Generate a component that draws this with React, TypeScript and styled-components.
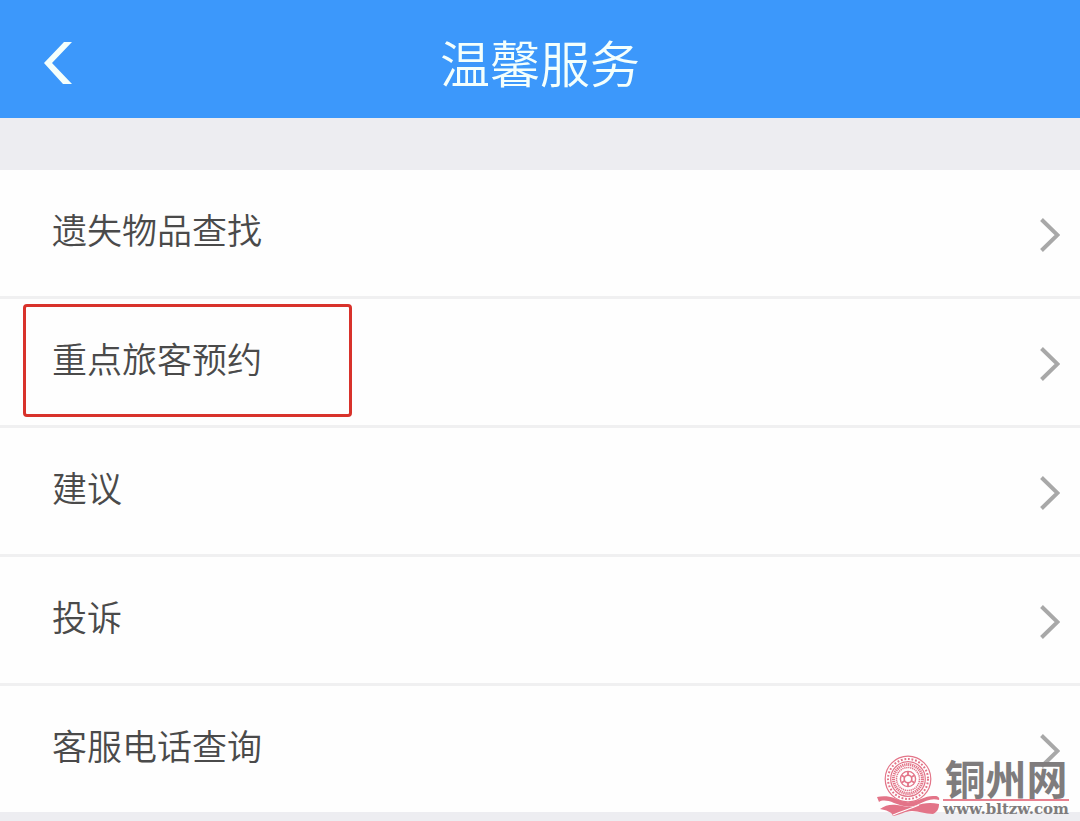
import React from "react";
import styled, { createGlobalStyle } from "styled-components";

const GlobalStyle = createGlobalStyle`
  * { box-sizing: border-box; }
  body {
    margin: 0;
    background: #ededf1;
    color: #4a4a4a;
    font-family: "Noto Sans CJK SC", sans-serif;
  }
`;

const Page = styled.div`
  position: relative;
  min-height: 100vh;
`;

const Header = styled.header`
  display: grid;
  grid-template-columns: 100px 1fr 100px;
  align-items: center;
  height: 118px;
  padding-top: 8px;
  background: #3c98fb;
  color: #f4fffc;
`;

const BackButton = styled.button`
  display: flex;
  justify-content: flex-end;
  width: 72px;
  padding: 0;
  border: 0;
  background: none;
  color: inherit;
  cursor: pointer;
`;

const Title = styled.h1`
  margin: 0;
  padding-bottom: 4px;
  font-size: 50px;
  font-weight: 350;
  line-height: 60px;
  text-align: center;
`;

const List = styled.ul`
  display: flex;
  flex-direction: column;
  gap: 3px;
  margin: 52px 0 0;
  padding: 0;
  background: #f0f0f1;
  list-style: none;
`;

const Item = styled.li`
  position: relative;
  background: #fefefe;
`;

const ItemLink = styled.a`
  display: flex;
  align-items: center;
  justify-content: space-between;
  height: 126px;
  padding: 0 20px 0 52px;
  color: inherit;
  font-size: 35px;
  font-weight: 350;
  line-height: 50px;
  text-decoration: none;
`;

const Label = styled.span`
  padding-bottom: 8px;
`;

const Chevron = styled.svg`
  display: block;
  margin-top: 4px;
`;

const Highlight = styled.span`
  position: absolute;
  top: 5px;
  left: 23px;
  width: 329px;
  height: 113px;
  border: 3px solid #d8322b;
  border-radius: 4px;
  pointer-events: none;
`;

const Watermark = styled.div`
  position: absolute;
  right: 11px;
  bottom: 4px;
  display: flex;
  align-items: flex-start;
  gap: 2px;
  color: #7f7c7d;
`;

const WatermarkText = styled.div`
  display: flex;
  flex-direction: column;
`;

const SiteName = styled.strong`
  font-size: 41px;
  font-weight: 700;
  line-height: 44px;
  text-align: center;
`;

const SiteAddress = styled.span`
  border-top: 2px solid #e8808f;
  font-family: "DejaVu Serif", serif;
  font-size: 15px;
  font-weight: 700;
  line-height: 16px;
`;

const items = ["遗失物品查找", "重点旅客预约", "建议", "投诉", "客服电话查询"];
const highlighted = "重点旅客预约";

function DrumLogo() {
  return (
    <svg width="64" height="62" viewBox="0 0 64 62" fill="none" aria-hidden="true">
      <g stroke="#e37488">
        <circle cx="31" cy="24" r="22.8" strokeWidth="1.2" />
        <circle cx="31" cy="24" r="20" strokeWidth="2" strokeDasharray="1.8 1.8" />
        <circle cx="31" cy="24" r="17.3" strokeWidth="1.2" />
        <circle cx="31" cy="24" r="14.5" strokeWidth="3" strokeDasharray="1.3 0.7" />
        <circle cx="31" cy="24" r="11.5" strokeWidth="1.5" strokeDasharray="1.3 0.7" />
        <circle cx="31" cy="24" r="7.6" strokeWidth="1.4" />
        <circle cx="31" cy="24" r="3.8" strokeWidth="1.6" />
      </g>
      <path
        d="M31 17V20M31 28V31M24.9 20.5L27.5 22M34.5 26L37.1 27.5M24.9 27.5L27.5 26M34.5 22L37.1 20.5"
        stroke="#e37488"
        strokeWidth="1.8"
      />
      <path d="M0 42C5 41 12 41 17 43C23 45 27 48 33 47C42 46 49 40 58 41C61 41 63 43 62 45C54 43 49 46 42 49C33 54 25 51 17 48C10 45 5 45 2 47Z" fill="#e37488" />
      <path d="M3 54C8 50 14 49 20 50C27 51 33 53 38 51C46 48 53 47 62 49C62 54 60 57 56 59C48 59 42 56 35 56C28 56 23 60 16 61C15 57 9 55 3 54Z" fill="#e37488" />
      <path d="M16 60C25 56 33 54 42 50" stroke="#fff" strokeWidth="1.2" />
    </svg>
  );
}

export default function App() {
  return (
    <Page>
      <GlobalStyle />
      <Header>
        <BackButton type="button" aria-label="返回">
          <svg width="28" height="42" viewBox="0 0 28 42" aria-hidden="true">
            <path d="M20 0H28L8 21L28 42H19L0 21Z" fill="currentColor" />
          </svg>
        </BackButton>
        <Title>温馨服务</Title>
      </Header>
      <List>
        {items.map((item) => (
          <Item key={item}>
            <ItemLink href="#">
              <Label>{item}</Label>
              <Chevron width="20" height="34" viewBox="0 0 20 34" fill="none" aria-hidden="true">
                <path d="M1.5 1.5L17.5 17L1.5 32.5" stroke="#a8a8a8" strokeWidth="4" />
              </Chevron>
            </ItemLink>
            {item === highlighted && <Highlight />}
          </Item>
        ))}
      </List>
      <Watermark>
        <DrumLogo />
        <WatermarkText>
          <SiteName>铜州网</SiteName>
          <SiteAddress>www.bltzw.com</SiteAddress>
        </WatermarkText>
      </Watermark>
    </Page>
  );
}
